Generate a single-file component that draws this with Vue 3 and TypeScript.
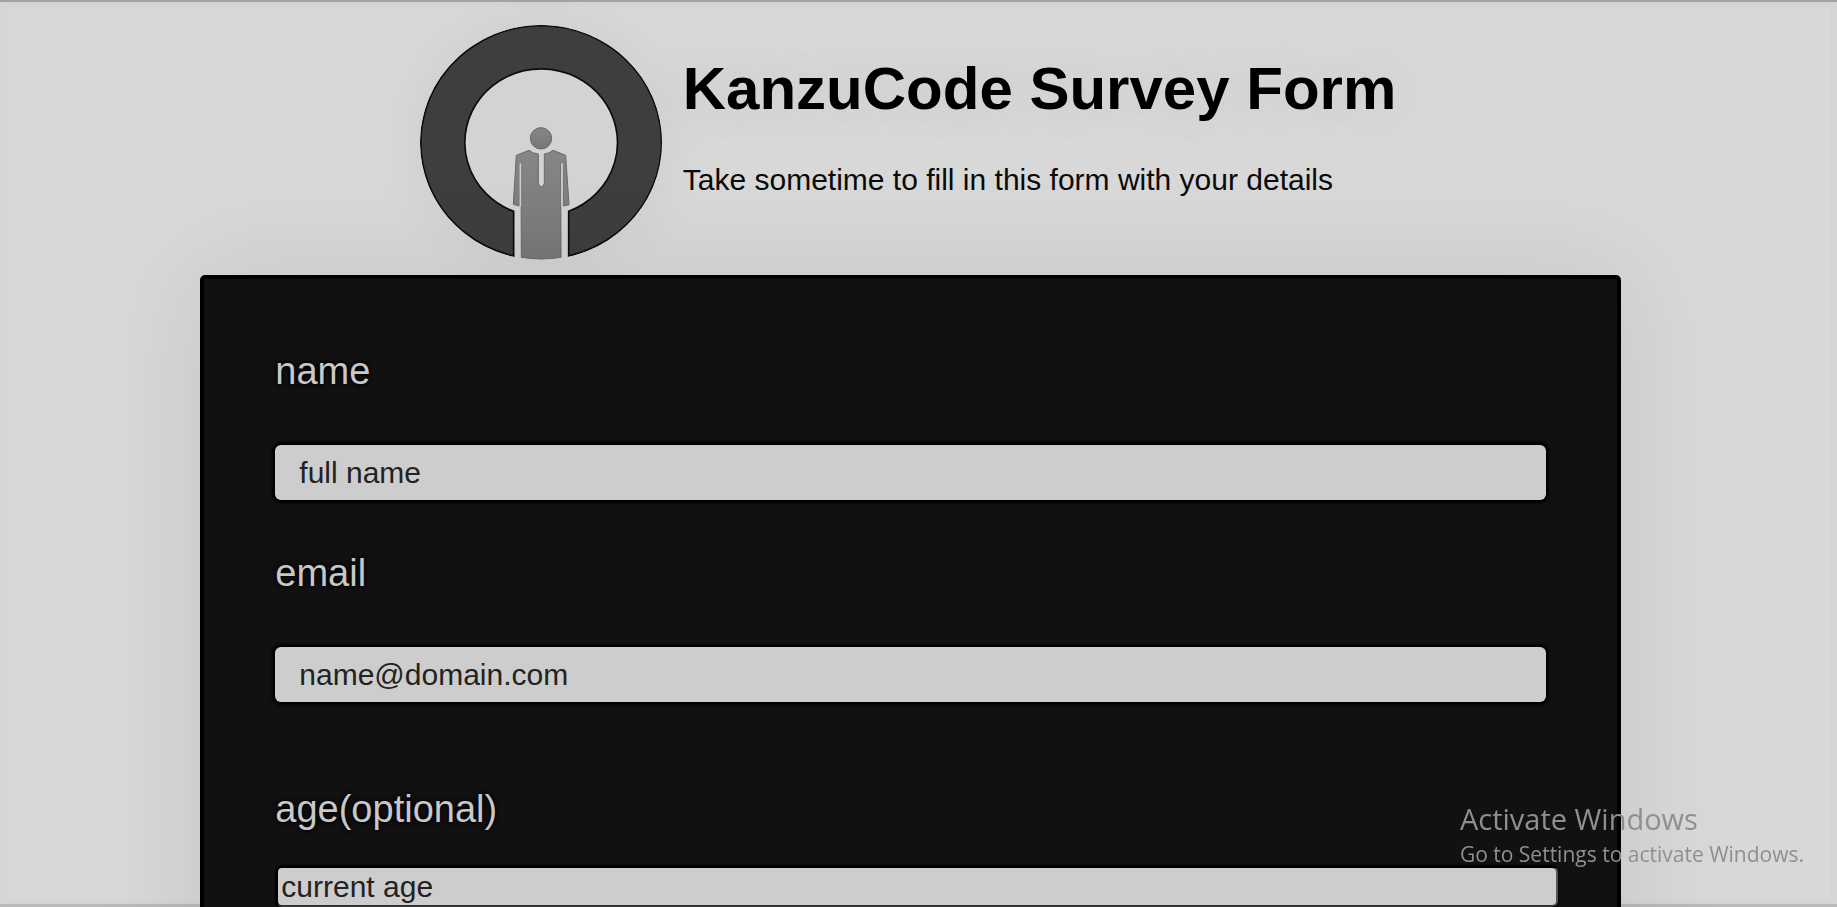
<script setup lang="ts">
import { ref } from 'vue'

interface Field {
  id: string
  label: string
  type: string
  placeholder: string
  variant: string
}

const fields: Field[] = [
  { id: 'name', label: 'name', type: 'text', placeholder: 'full name', variant: 'text' },
  { id: 'email', label: 'email', type: 'email', placeholder: 'name@domain.com', variant: 'text' },
  { id: 'age', label: 'age(optional)', type: 'number', placeholder: 'current age', variant: 'number' },
]

const values = ref<Record<string, string>>({ name: '', email: '', age: '' })
</script>

<template>
  <div class="page">
    <header class="header">
      <svg class="logo" viewBox="60 45 726 705" role="img" aria-label="KanzuCode logo">
        <defs>
          <linearGradient id="robe" x1="0" y1="0" x2="0" y2="1">
            <stop offset="0" stop-color="#868686" />
            <stop offset="1" stop-color="#777777" />
          </linearGradient>
        </defs>
        <path
          class="ring"
          d="M341 738 A361 350 0 1 1 506 738 L506 604 A229 221 0 1 0 341 604 Z"
        />
        <g class="figure">
          <circle cx="423" cy="385" r="32" />
          <path
            d="M387 421 Q399 431 415 432 L415 522 L424 532 L433 522 L433 432 Q448 431 459 421 L497 436 L507 584 L489 588 L488 460 L482 460 L483 742 Q424 752 364 742 L363 460 L360 460 L358 588 L340 583 L349 436 Z"
          />
          <path class="gap" d="M361 460 V590 M486 460 V590" />
        </g>
      </svg>
      <div class="intro">
        <h1>KanzuCode Survey Form</h1>
        <p>Take sometime to fill in this form with your details</p>
      </div>
    </header>

    <form class="card" @submit.prevent>
      <div v-for="field in fields" :key="field.id" class="field" :class="field.variant">
        <label :for="field.id">{{ field.label }}</label>
        <input
          :id="field.id"
          v-model="values[field.id]"
          :type="field.type"
          :placeholder="field.placeholder"
        />
      </div>
    </form>

    <aside class="watermark">
      <p class="watermark-title">Activate Windows</p>
      <p class="watermark-text">Go to Settings to activate Windows.</p>
    </aside>
  </div>
</template>

<style>
body {
  margin: 0;
  background: #d8d8d8;
}
</style>

<style scoped>
.page {
  box-sizing: border-box;
  height: 100vh;
  overflow: hidden;
  padding-right: 16px;
  background: #d8d8d8;
  box-shadow:
    inset 0 2px #a3a3a3,
    inset 0 -3px #b9b9b9,
    inset 0 0 0 7px #d5d5d5;
  font-family: 'Liberation Sans', Arial, sans-serif;
}

.header {
  display: flex;
  justify-content: center;
  gap: 21px;
  padding: 25px 5px 15px 0;
}

.logo {
  width: 242px;
  height: 235px;
  flex: none;
  border-radius: 50%;
  background: rgba(0, 0, 0, 0.02);
  box-shadow: 0 0 60px rgba(0, 0, 0, 0.05);
}

.ring {
  fill: #3e3e3e;
  stroke: #0c0c0c;
  stroke-width: 5;
}

.figure {
  fill: url(#robe);
  stroke: #686868;
  stroke-width: 3;
}

.gap {
  fill: none;
  stroke: #cfcfcf;
  stroke-width: 5;
}

.intro {
  padding-top: 30px;
}

h1 {
  margin: 0 0 40px;
  font-size: 60px;
  line-height: 68px;
  color: #000;
  text-shadow: 0 0 60px rgba(0, 0, 0, 0.12);
}

.intro p {
  margin: 0;
  font-size: 30px;
  line-height: 34px;
  color: #0a0a0a;
}

.card {
  position: relative;
  box-sizing: border-box;
  width: 78%;
  margin: 0 auto;
  padding: 70px 71px;
  border: 4px solid #000;
  border-radius: 5px;
  background: #111;
  box-shadow: 0 0 110px rgba(0, 0, 0, 0.09);
}

.field {
  display: flex;
  flex-direction: column;
  gap: 52px;
  margin-bottom: 51px;
}

label {
  align-self: flex-start;
  font-size: 38px;
  line-height: 44px;
  color: #c8c8c8;
  text-shadow: 0 0 4px #000, 0 0 4px #000;
}

input {
  box-sizing: border-box;
  height: 55px;
  padding: 0 24px;
  border: 0;
  border-radius: 6px;
  background: #cdcdcd;
  box-shadow: 0 0 3px 3px #000;
  font: 30px 'Liberation Sans', Arial, sans-serif;
  color: #222;
}

input::placeholder {
  color: #222;
  opacity: 1;
}

.number {
  gap: 35px;
  margin-top: 85px;
}

.number input {
  height: 41px;
  margin: 0 -12px 0 1px;
  padding: 1px 3px;
  border: 2px solid;
  border-color: #000 #555 #333 #000;
  box-shadow: 0 0 2px 1px #000;
  appearance: textfield;
}

.watermark {
  position: fixed;
  right: 33px;
  bottom: 38px;
  font-family: 'Open Sans', 'Noto Sans', sans-serif;
  color: #8f8f8f;
}

.watermark p {
  margin: 0;
}

.watermark-title {
  font-size: 29px;
  line-height: 40px;
}

.watermark-text {
  font-size: 21px;
  line-height: 30px;
}
</style>
